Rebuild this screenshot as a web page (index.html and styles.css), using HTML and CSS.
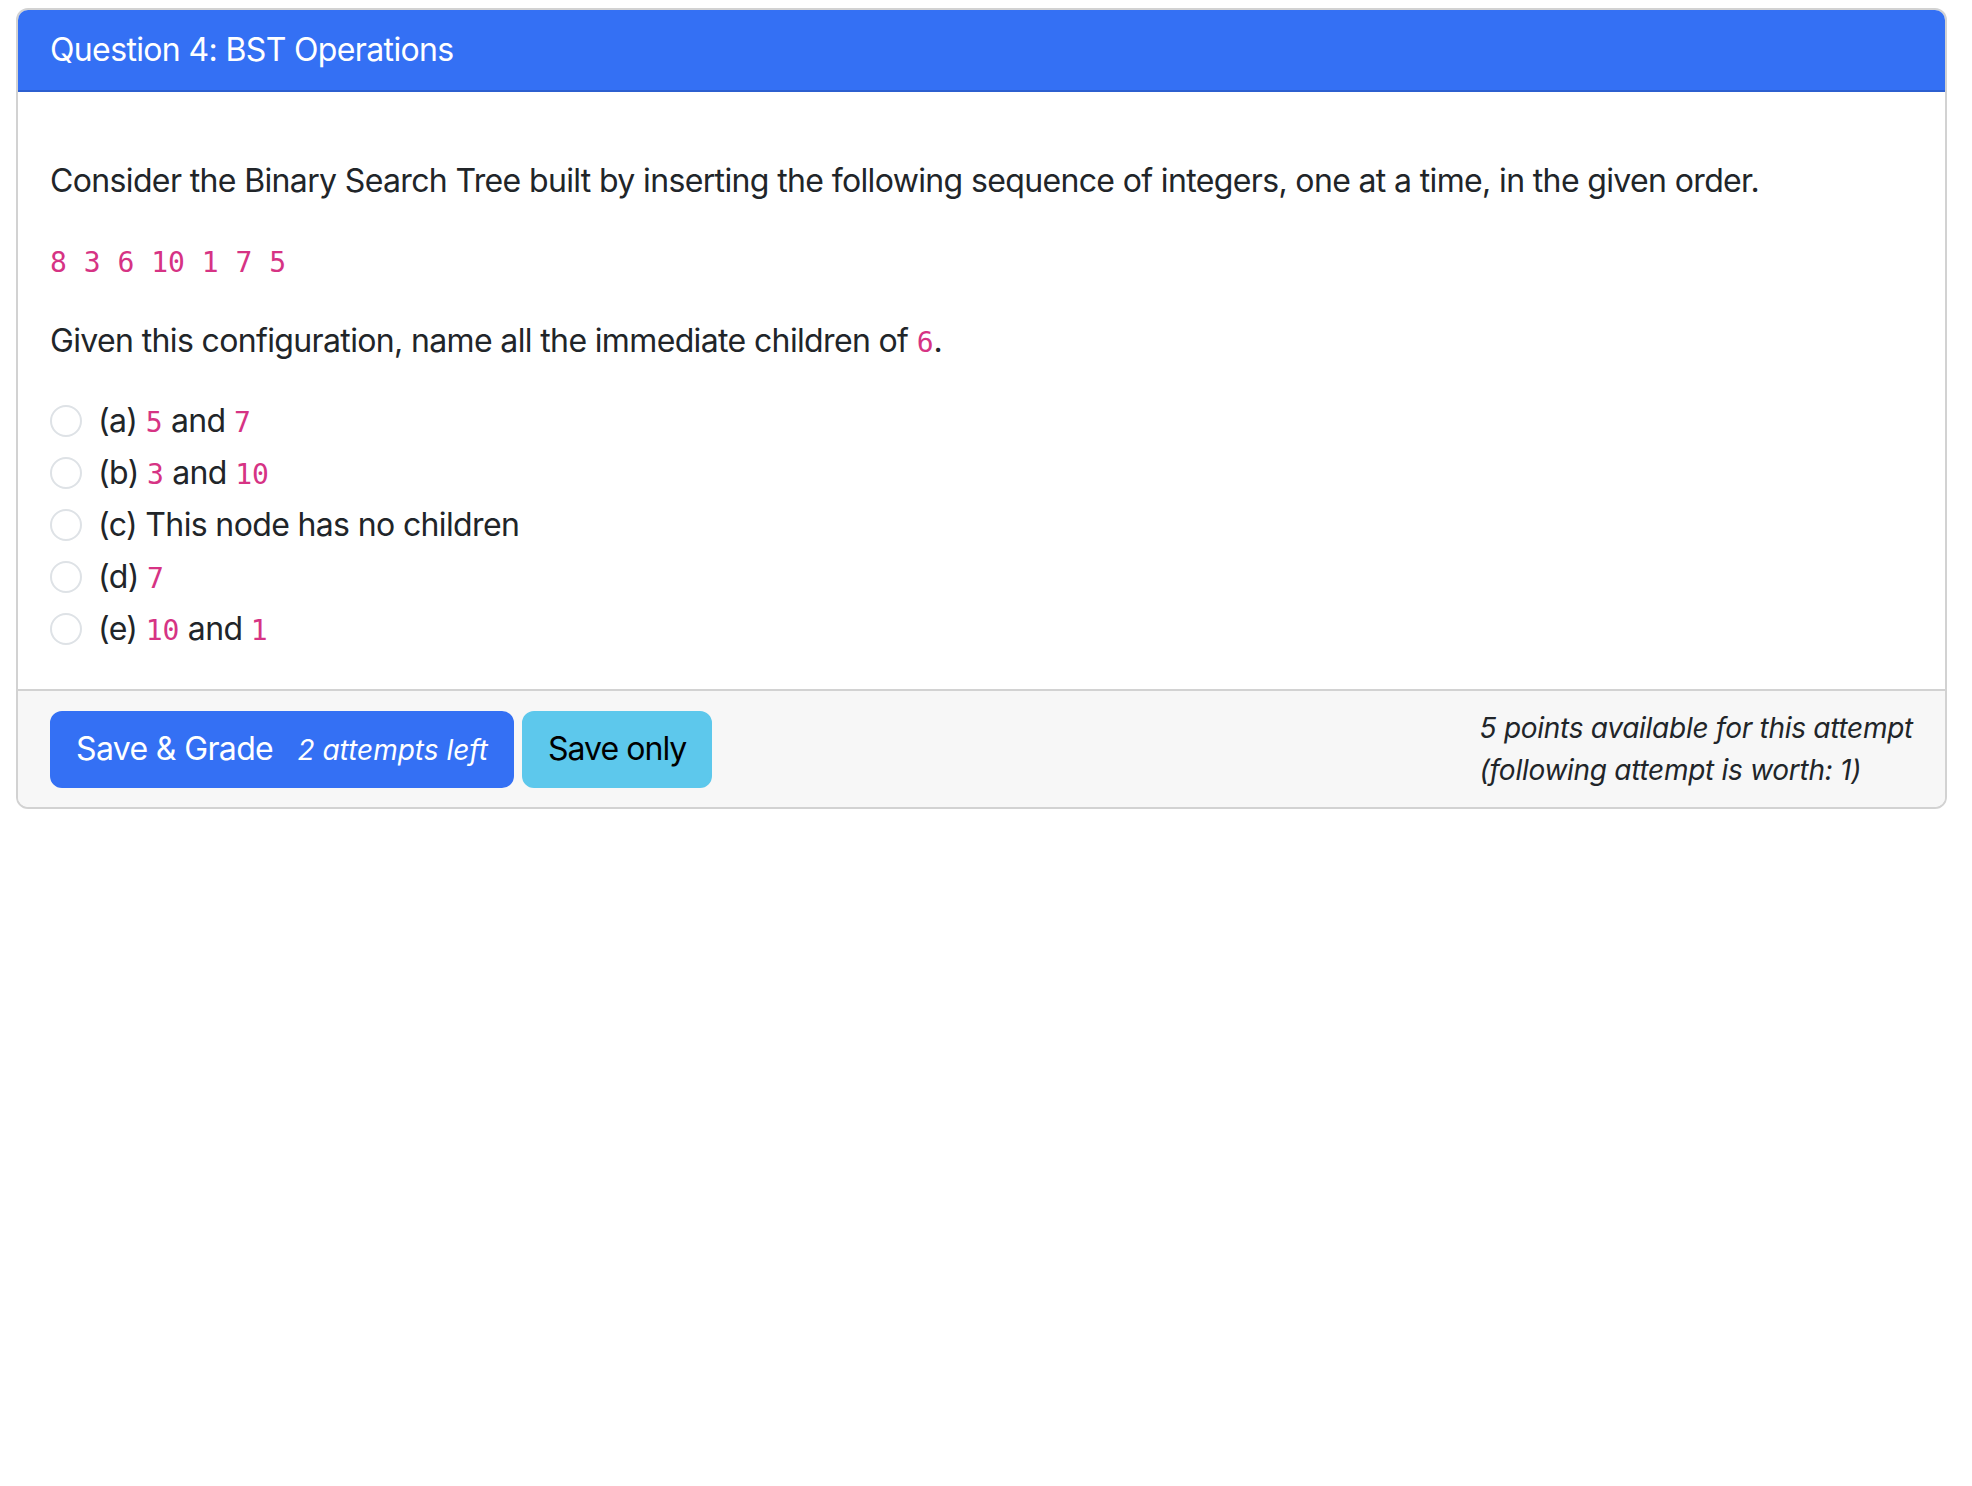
FILE: index.html
```html
<!DOCTYPE html>
<html lang="en">
<head>
<meta charset="utf-8">
<title>Question 4: BST Operations</title>
<link rel="stylesheet" href="styles.css">
</head>
<body>
<div class="page">
  <div class="card">
    <div class="card-header">Question 4: BST Operations</div>
    <div class="card-body">
      <p>Consider the Binary Search Tree built by inserting the following sequence of integers, one at a time, in the given order.</p>
      <p><code>8 3 6 10 1 7 5</code></p>
      <p>Given this configuration, name all the immediate children of <code>6</code>.</p>
      <div class="options">
        <label class="form-check"><span class="radio"></span><span class="form-label">(a) <code>5</code> and <code>7</code></span></label>
        <label class="form-check"><span class="radio"></span><span class="form-label">(b) <code>3</code> and <code>10</code></span></label>
        <label class="form-check"><span class="radio"></span><span class="form-label">(c) This node has no children</span></label>
        <label class="form-check"><span class="radio"></span><span class="form-label">(d) <code>7</code></span></label>
        <label class="form-check"><span class="radio"></span><span class="form-label">(e) <code>10</code> and <code>1</code></span></label>
      </div>
    </div>
    <div class="card-footer">
      <div class="buttons">
        <button class="btn btn-primary">Save &amp; Grade <small class="attempts">2 attempts left</small></button>
        <button class="btn btn-info">Save only</button>
      </div>
      <div class="points">
        <div>5 points available for this attempt</div>
        <div>(following attempt is worth: 1)</div>
      </div>
    </div>
  </div>
</div>
</body>
</html>
```
FILE: styles.css
```css
html, body {
  margin: 0;
  padding: 0;
  background: #ffffff;
}
body {
  font-family: Inter, "Liberation Sans", sans-serif;
  font-size: 32px;
  line-height: 48px;
  letter-spacing: -0.02em;
  color: #212529;
}
.page {
  padding: 8px 25px 0 16px;
}
.card {
  border: 2px solid #d2d2d2;
  border-radius: 12px;
  overflow: hidden;
  background: #ffffff;
}
.card-header {
  background: #3470f4;
  color: #ffffff;
  padding: 16px 32px;
  border-bottom: 2px solid #2c5fd0;
}
.card-body {
  padding: 65px 32px 32px;
}
.card-body p {
  margin: 0 0 32px;
}
code {
  font-family: "DejaVu Sans Mono", "Liberation Mono", monospace;
  font-size: 28px;
  line-height: 1;
  letter-spacing: 0;
  color: #d63384;
}
.options {
  display: flex;
  flex-direction: column;
}
.form-check {
  display: flex;
  align-items: flex-start;
  height: 48px;
  margin-bottom: 4px;
}
.form-label {
  line-height: 48px;
}
.radio {
  flex: none;
  width: 28px;
  height: 28px;
  margin-top: 8px;
  margin-right: 16px;
  border: 2px solid #dee2e6;
  border-radius: 50%;
  background: #ffffff;
}
.card-footer {
  background: #f7f7f7;
  border-top: 2px solid #d2d2d2;
  padding: 16px 32px;
  display: flex;
  justify-content: space-between;
  align-items: center;
}
.buttons {
  display: flex;
  gap: 8px;
}
.btn {
  font-family: inherit;
  font-size: 32px;
  line-height: 48px;
  letter-spacing: -0.02em;
  padding: 12px 24px;
  border: 2px solid transparent;
  border-radius: 12px;
  cursor: pointer;
}
.btn-primary {
  background: #3470f4;
  border-color: #3470f4;
  color: #ffffff;
}
.btn-info {
  background: #5dc8ec;
  border-color: #5dc8ec;
  color: #000000;
  letter-spacing: -0.03em;
}
.attempts {
  font-size: 28px;
  font-style: italic;
  letter-spacing: 0;
  margin-left: 16px;
}
.points {
  font-size: 28px;
  line-height: 42px;
  font-style: italic;
  letter-spacing: -0.01em;
}
```
